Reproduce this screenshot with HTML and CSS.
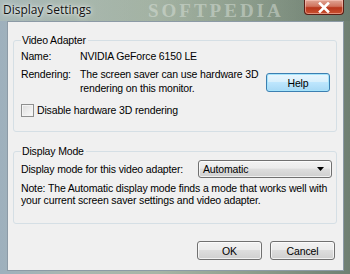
FILE: index.html
```html
<!DOCTYPE html>
<html>
<head>
<meta charset="utf-8">
<link rel="stylesheet" href="styles.css">
</head>
<body>
<div class="window">
  <div class="titlebar">
    <span class="title">Display Settings</span>
    <span class="watermark">SOFTPEDIA</span>
    <span class="close"><svg width="14" height="11" viewBox="0 0 14 11"><path d="M3 1.5 L11 9.5 M11 1.5 L3 9.5" stroke="#fff" stroke-width="2.6" stroke-linecap="square"/></svg></span>
  </div>
  <div class="client">
    <fieldset class="group group-adapter">
      <legend>Video Adapter</legend>
      <div class="row name-row">
        <span class="label">Name:</span>
        <span class="value">NVIDIA GeForce 6150 LE</span>
      </div>
      <div class="row render-row">
        <span class="label">Rendering:</span>
        <span class="value">The screen saver can use hardware 3D<br>rendering on this monitor.</span>
        <button class="btn btn-help">Help</button>
      </div>
      <label class="check-row">
        <span class="checkbox"></span>
        <span>Disable hardware 3D rendering</span>
      </label>
    </fieldset>
    <fieldset class="group group-mode">
      <legend>Display Mode</legend>
      <div class="row mode-row">
        <span>Display mode for this video adapter:</span>
        <div class="select"><span>Automatic</span><svg width="7" height="4" viewBox="0 0 7 4"><path d="M0 0 H7 L3.5 4 Z" fill="#000"/></svg></div>
      </div>
      <p class="note">Note: The Automatic display mode finds a mode that works well with<br>your current screen saver settings and video adapter.</p>
    </fieldset>
    <div class="buttons">
      <button class="btn">OK</button>
      <button class="btn">Cancel</button>
    </div>
  </div>
</div>
</body>
</html>
```
FILE: styles.css
```css
* { box-sizing: border-box; }
html, body { margin: 0; padding: 0; }
body {
  width: 350px;
  height: 274px;
  overflow: hidden;
  font-family: "Liberation Sans", Arial, sans-serif;
  font-size: 10.5px;
  letter-spacing: -0.15px;
  color: #000;
  white-space: nowrap;
}
.window {
  width: 350px;
  height: 274px;
  display: flex;
  flex-direction: column;
  background: linear-gradient(90deg, #9eb0bd 0%, #a8b7b0 20%, #a7b5a6 45%, #8f9f8e 70%, #6f7f72 100%);
  padding: 0 6px 3px 7px;
}
.titlebar {
  height: 21px;
  display: flex;
  align-items: flex-start;
  position: relative;
  margin: 0 -6px 0 -7px;
  padding-left: 3px;
  background: linear-gradient(90deg, rgba(175,190,180,0.6), rgba(150,168,150,0.3) 50%, rgba(90,110,95,0.2));
}
.title {
  font-family: "Open Sans", "Liberation Sans", sans-serif;
  font-size: 12px;
  letter-spacing: 0;
  line-height: 20px;
  color: #111;
  text-shadow: 0 0 6px rgba(255,255,255,0.9), 0 0 3px rgba(255,255,255,0.8);
}
.watermark {
  position: absolute;
  left: 148px;
  top: 0;
  font-family: "Liberation Serif", serif;
  font-weight: bold;
  font-size: 19px;
  line-height: 21px;
  letter-spacing: 3px;
  color: rgba(225,232,225,0.45);
}
.close {
  position: absolute;
  right: 6px;
  top: 0;
  width: 40px;
  height: 15px;
  border: 1px solid #5b1d14;
  border-top: none;
  border-radius: 0 0 4px 4px;
  background: linear-gradient(#e0a595 0%, #d0735e 45%, #b8361c 55%, #c8502f 100%);
  box-shadow: inset 0 0 0 1px rgba(255,210,200,0.5);
  display: flex;
  align-items: center;
  justify-content: center;
}
.client {
  flex: 1;
  background: #f0f0f0;
  border: 1px solid #8c9aa6;
  display: flex;
  flex-direction: column;
  padding: 12px 6px 0 5px;
}
.group {
  margin: 0;
  padding: 0 4px 0 7px;
  border: 1px solid #d5dfe5;
  border-radius: 3px;
  min-width: 0;
}
legend {
  padding: 0 2px 0 1px;
  margin-left: 0;
  line-height: 13px;
}
.group-adapter { height: 98px; }
.group-mode { height: 79px; margin-top: 13px; }
.row { display: flex; }
.label { width: 59px; flex: none; }
.name-row { margin-top: 3px; line-height: 13px; }
.render-row { margin-top: 4px; line-height: 14px; align-items: flex-start; }
.render-row .value { flex: 1; }
.btn {
  font-family: inherit;
  font-size: 10.5px;
  letter-spacing: -0.15px;
  color: #000;
  height: 19px;
  padding: 0;
  border: 1px solid #707070;
  border-radius: 3px;
  background: linear-gradient(#f2f2f2 0%, #ebebeb 45%, #dddddd 50%, #cfcfcf 100%);
  box-shadow: inset 0 0 0 1px rgba(255,255,255,0.7);
}
.btn-help {
  width: 64px;
  margin-top: 6px;
  margin-right: 2px;
  border-color: #3c7fb1;
  background: linear-gradient(#eaf6fd 0%, #d9f0fc 45%, #bee6fd 50%, #a7d9f5 100%);
  box-shadow: inset 0 0 0 1px #a6e4fb;
}
.check-row {
  display: flex;
  align-items: center;
  margin-top: 9px;
  gap: 3px;
  line-height: 13px;
}
.checkbox {
  width: 13px;
  height: 13px;
  border: 1px solid #8e8f8f;
  background: linear-gradient(135deg, #dcdcdc, #fbfbfb);
  box-shadow: inset 0 0 0 1px #f4f4f4;
}
.mode-row {
  margin-top: 2px;
  align-items: center;
  justify-content: space-between;
}
.select {
  width: 134px;
  height: 18px;
  border: 1px solid #707070;
  border-radius: 3px;
  background: linear-gradient(#f2f2f2 0%, #ebebeb 45%, #dddddd 50%, #cfcfcf 100%);
  box-shadow: inset 0 0 0 1px rgba(255,255,255,0.7);
  display: flex;
  align-items: center;
  justify-content: space-between;
  padding: 0 7px 0 4px;
}
.note {
  margin: 4px 0 0;
  line-height: 12px;
}
.buttons {
  display: flex;
  justify-content: flex-end;
  gap: 8px;
  margin-top: 17px;
  padding-right: 2px;
}
.buttons .btn { width: 65px; }
```
